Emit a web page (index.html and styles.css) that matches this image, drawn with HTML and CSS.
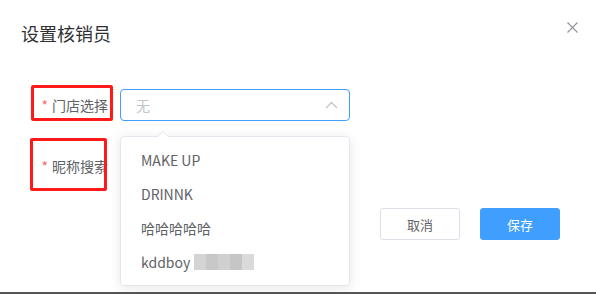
FILE: index.html
```html
<!DOCTYPE html>
<html lang="zh-CN">
<head>
    <meta charset="UTF-8" />
    <meta name="viewport" content="width=device-width, initial-scale=1" />
    <title>设置核销员</title>
    <link rel="stylesheet" href="styles.css">
</head>
<body>
    <div class="dialog">
        <header class="dialog-header">
            <span class="dialog-title">设置核销员</span>
            <button class="dialog-close" aria-label="关闭">
                <svg width="11" height="11" viewBox="0 0 11 11"><path d="M0.5 0.5 L10.5 10.5 M10.5 0.5 L0.5 10.5" stroke="#909399" stroke-width="1.1" fill="none"/></svg>
            </button>
        </header>
        <form class="form">
            <div class="form-item">
                <label class="form-label"><span class="req">*</span>门店选择</label>
                <div class="select">
                    <span class="select-placeholder">无</span>
                    <svg class="select-arrow" width="13" height="8" viewBox="0 0 13 8"><path d="M1 7 L6.5 1.5 L12 7" stroke="#c0c4cc" stroke-width="1.3" fill="none"/></svg>
                </div>
            </div>
            <div class="form-item">
                <label class="form-label"><span class="req">*</span>昵称搜索</label>
            </div>
            <div class="form-footer">
                <button type="button" class="btn">取消</button>
                <button type="button" class="btn btn-primary">保存</button>
            </div>
        </form>

        <div class="mark mark-1"></div>
        <div class="mark mark-2"></div>

        <div class="dropdown">
            <span class="dropdown-arrow"></span>
            <ul class="dropdown-list">
                <li>MAKE UP</li>
                <li>DRINNK</li>
                <li>哈哈哈哈哈</li>
                <li>kddboy<span class="blur"></span></li>
            </ul>
        </div>
    </div>
    <div class="bottom-bar"></div>
</body>
</html>
```

FILE: styles.css
```css
* {
    box-sizing: border-box;
}
body {
    margin: 0;
    background: #fff;
    font-family: "Noto Sans CJK SC", "Noto Sans", sans-serif;
    color: #606266;
}
.dialog {
    position: relative;
    height: 292px;
    overflow: hidden;
}
.dialog-header {
    display: flex;
    justify-content: space-between;
    align-items: flex-start;
    padding: 21px 18px 0 21px;
    height: 89px;
}
.dialog-title {
    font-size: 18px;
    line-height: 24px;
    color: #303133;
}
.dialog-close {
    border: none;
    background: none;
    padding: 0;
    margin-top: 1px;
    line-height: 0;
    cursor: pointer;
}
.form {
    padding: 0 36px 0 20px;
}
.form-item {
    display: flex;
    height: 32px;
    margin-bottom: 29px;
}
.form-label {
    width: 100px;
    padding-right: 12px;
    text-align: right;
    font-size: 14px;
    line-height: 32px;
    color: #606266;
}
.req {
    color: #f56c6c;
    margin-right: 4px;
}
.select {
    width: 230px;
    height: 32px;
    border: 1px solid #409eff;
    border-radius: 4px;
    display: flex;
    align-items: center;
    justify-content: space-between;
    padding: 0 11px 0 15px;
}
.select-placeholder {
    font-size: 14px;
    color: #c0c4cc;
}
.form-footer {
    display: flex;
    justify-content: flex-end;
    gap: 20px;
    margin-top: -3px;
}
.btn {
    width: 80px;
    height: 32px;
    border: 1px solid #dcdfe6;
    border-radius: 3px;
    background: #fff;
    color: #606266;
    font-family: inherit;
    font-size: 13px;
    cursor: pointer;
}
.btn-primary {
    background: #409eff;
    border-color: #409eff;
    color: #fff;
}
/* red annotation boxes */
.mark {
    position: absolute;
    border: 3px solid #ff1a1a;
    border-radius: 2px;
}
.mark-1 {
    left: 31px;
    top: 85px;
    width: 82px;
    height: 36px;
}
.mark-2 {
    left: 30px;
    top: 138px;
    width: 77px;
    height: 53px;
}
.dropdown {
    position: absolute;
    left: 120px;
    top: 136px;
    width: 230px;
    background: #fff;
    border: 1px solid #e4e7ed;
    border-radius: 4px;
    box-shadow: 0 2px 12px rgba(0, 0, 0, 0.1);
}
.dropdown-arrow {
    position: absolute;
    top: -6px;
    left: 36px;
    width: 0;
    height: 0;
    border-left: 6px solid transparent;
    border-right: 6px solid transparent;
    border-bottom: 6px solid #e4e7ed;
}
.dropdown-arrow::after {
    content: "";
    position: absolute;
    left: -5px;
    top: 1px;
    border-left: 5px solid transparent;
    border-right: 5px solid transparent;
    border-bottom: 5px solid #fff;
}
.dropdown-list {
    list-style: none;
    margin: 0;
    padding: 6px 0;
}
.dropdown-list li {
    height: 34px;
    line-height: 34px;
    padding: 0 20px;
    font-size: 14px;
    color: #606266;
    display: flex;
    align-items: center;
}
.blur {
    display: inline-block;
    width: 60px;
    height: 16px;
    margin-left: 4px;
    background: linear-gradient(90deg, #d4d4d4 0 12px, #c8c8c8 12px 24px, #d0d0d0 24px 36px, #c6c6c6 36px 48px, #dadada 48px 60px);
}
.bottom-bar {
    height: 2px;
    background: #555;
}
```
